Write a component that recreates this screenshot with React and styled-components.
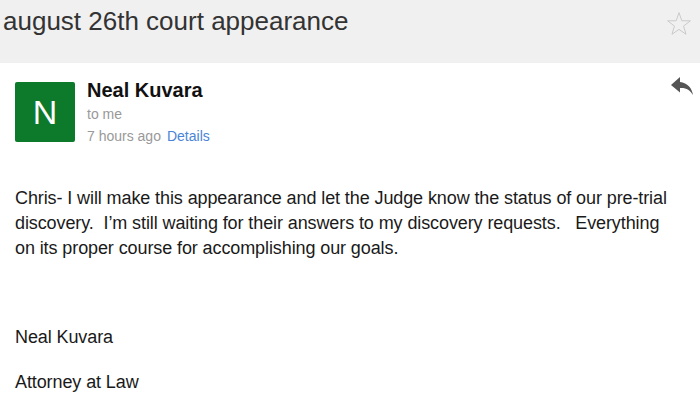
import React from "react";
import styled, { createGlobalStyle } from "styled-components";

const Global = createGlobalStyle`
  html, body { margin: 0; padding: 0; background: #fff; }
  body { font-family: "Liberation Sans", Arial, sans-serif; width: 700px; height: 409px; overflow: hidden; }
`;

const Page = styled.div`
  display: flex;
  flex-direction: column;
  width: 700px;
`;

const SubjectBar = styled.div`
  background: #f0f0f0;
  height: 63px;
  display: flex;
  align-items: flex-start;
  justify-content: space-between;
  padding: 5px 8px 0 3px;
  box-sizing: border-box;
`;

const Subject = styled.h1`
  margin: 0;
  font-weight: 300;
  font-size: 26px;
  color: #333;
  line-height: 32px;
`;

const StarWrap = styled.div`
  margin-top: 6px;
`;

const Header = styled.div`
  display: flex;
  padding: 14px 6px 0 15px;
  align-items: flex-start;
`;

const Avatar = styled.div`
  width: 60px;
  height: 60px;
  margin-top: 5px;
  background: #0d7a2b;
  border-radius: 2px;
  color: #fff;
  font-size: 34px;
  font-weight: 300;
  display: flex;
  align-items: center;
  justify-content: center;
`;

const Meta = styled.div`
  flex: 1;
  display: flex;
  flex-direction: column;
  margin-left: 12px;
`;

const Name = styled.div`
  font-weight: bold;
  font-size: 20px;
  color: #111;
  line-height: 26px;
`;

const Sub = styled.div`
  font-size: 14px;
  color: #999;
  line-height: 22px;
`;

const Link = styled.span`
  color: #4a84d6;
  margin-left: 6px;
`;

const ReplyWrap = styled.div`
  margin-top: -2px;
`;

const Body = styled.div`
  padding: 39px 25px 0 15px;
  font-size: 18px;
  line-height: 25px;
  color: #1a1a1a;
  letter-spacing: -0.1px;
`;

const Para = styled.p`
  margin: 0;
  white-space: pre-wrap;
`;

const Sig = styled.p`
  margin: ${(p) => p.$top}px 0 0 0;
`;

export default function App() {
  return (
    <Page>
      <Global />
      <SubjectBar>
        <Subject>august 26th court appearance</Subject>
        <StarWrap>
          <svg width="26" height="26" viewBox="0 0 24 24" fill="none" stroke="#c8c8c8" strokeWidth="0.9" strokeLinejoin="miter">
            <path d="M12 1.5 L14.6 9 L22.5 9.1 L16.2 13.9 L18.5 21.5 L12 17 L5.5 21.5 L7.8 13.9 L1.5 9.1 L9.4 9 Z" />
          </svg>
        </StarWrap>
      </SubjectBar>
      <Header>
        <Avatar>N</Avatar>
        <Meta>
          <Name>Neal Kuvara</Name>
          <Sub>to me</Sub>
          <Sub>7 hours ago<Link>Details</Link></Sub>
        </Meta>
        <ReplyWrap>
          <svg width="24" height="22" viewBox="0 0 24 22">
            <path d="M10 2 L1 10 L10 17.5 L10 13 C16 12.5 20 15 23 20 C22 13 17.5 8 10 7 Z" fill="#555" />
          </svg>
        </ReplyWrap>
      </Header>
      <Body>
        <Para>{"Chris- I will make this appearance and let the Judge know the status of our pre-trial discovery.  I\u2019m still waiting for their answers to my discovery requests.   Everything on its proper course for accomplishing our goals."}</Para>
        <Sig $top={64}>Neal Kuvara</Sig>
        <Sig $top={20}>Attorney at Law</Sig>
      </Body>
    </Page>
  );
}
